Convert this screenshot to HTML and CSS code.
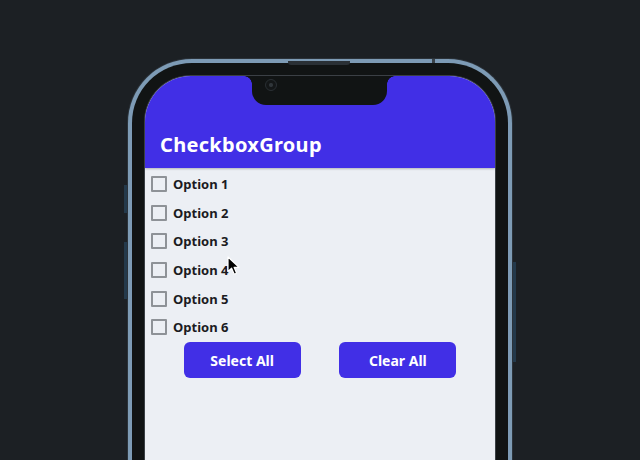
FILE: index.html
```html
<!DOCTYPE html>
<html>
<head>
    <title>CheckboxGroup</title>
    <link rel="stylesheet" href="styles.css">
</head>

<body>
    <div class="phone">
        <span class="speaker"></span>
        <span class="mark"></span>
        <span class="side-btn side-btn-1"></span>
        <span class="side-btn side-btn-2"></span>
        <span class="side-btn side-btn-3"></span>

        <div class="screen">
            <div class="notch"><span class="camera"></span></div>

            <div class="app-bar">
                <h1 class="title">CheckboxGroup</h1>
            </div>

            <ul class="options">
                <li class="option"><span class="box"></span>Option 1</li>
                <li class="option"><span class="box"></span>Option 2</li>
                <li class="option"><span class="box"></span>Option 3</li>
                <li class="option"><span class="box"></span>Option 4</li>
                <li class="option"><span class="box"></span>Option 5</li>
                <li class="option"><span class="box"></span>Option 6</li>
            </ul>

            <div class="actions">
                <button class="btn">Select All</button>
                <button class="btn">Clear All</button>
            </div>
        </div>
    </div>

    <!-- mouse pointer -->
    <svg class="cursor" width="14" height="20" viewBox="0 0 14 20">
        <path d="M1 1 L1 15.5 L4.6 12.2 L7.2 18.2 L9.6 17.2 L7.1 11.3 L12 11.3 Z" fill="#000" stroke="#fff" stroke-width="1.2" stroke-linejoin="round"/>
    </svg>
</body>

</html>
```

FILE: styles.css
```css
body {
    margin: 0;
    height: 460px;
    overflow: hidden;
    background-color: #1c2024;
    font-family: "Noto Sans", "DejaVu Sans", sans-serif;
}

.phone {
    position: relative;
    width: 350px;
    height: 384px;
    margin: 59px auto 0;
    padding: 13px 13px 0;
    border: 4px solid #7d9bb5;
    border-bottom: none;
    border-radius: 64px 64px 0 0;
    background-color: #111414;
    box-shadow: 0 0 0 1px #2b3239;
}

.speaker {
    position: absolute;
    top: -2px;
    left: 156px;
    width: 62px;
    height: 4px;
    border-radius: 0 0 3px 3px;
    background-color: #2a3035;
}

.mark {
    position: absolute;
    top: -4px;
    left: 300px;
    width: 3px;
    height: 4px;
    background-color: #3a4248;
}

.side-btn {
    position: absolute;
    width: 3px;
    background-color: #23394b;
}

.side-btn-1 {
    left: -8px;
    top: 122px;
    height: 28px;
}

.side-btn-2 {
    left: -8px;
    top: 179px;
    height: 57px;
}

.side-btn-3 {
    right: -8px;
    top: 199px;
    height: 100px;
}

.screen {
    position: relative;
    height: 384px;
    border-radius: 46px 46px 0 0;
    background-color: #eceff4;
    overflow: hidden;
    box-shadow: 0 0 0 1px #3b4045;
}

.notch {
    position: absolute;
    z-index: 2;
    top: 0;
    left: 107px;
    width: 135px;
    height: 29px;
    background-color: #111414;
    border-radius: 0 0 14px 14px;
}

.notch::before,
.notch::after {
    content: "";
    position: absolute;
    top: 0;
    width: 8px;
    height: 8px;
}

.notch::before {
    left: -8px;
    background: radial-gradient(circle at 0 100%, transparent 7.5px, #111414 8px);
}

.notch::after {
    right: -8px;
    background: radial-gradient(circle at 100% 100%, transparent 7.5px, #111414 8px);
}

.camera {
    position: absolute;
    top: 3px;
    left: 13px;
    width: 10px;
    height: 10px;
    border: 1.5px solid #2a3034;
    border-radius: 50%;
    background: radial-gradient(circle, #30363a 1.5px, #141718 2.5px);
}

.app-bar {
    position: relative;
    height: 92px;
    padding-left: 15px;
    display: flex;
    align-items: flex-end;
    background-color: #412fe6;
    box-shadow: 0 1px 2px rgba(0, 0, 0, 0.25);
}

.title {
    margin: 0 0 10px;
    color: white;
    font-size: 20px;
    font-weight: bold;
    letter-spacing: 0.3px;
}

.options {
    list-style: none;
    margin: 0;
    padding: 1.5px 0 0 6px;
}

.option {
    height: 28.7px;
    display: flex;
    align-items: center;
    gap: 6px;
    color: #1b1b1f;
    font-size: 13px;
    font-weight: bold;
}

.box {
    width: 12px;
    height: 12px;
    border: 2px solid #8e9297;
    border-radius: 1px;
}

.actions {
    display: flex;
    justify-content: space-evenly;
    margin-top: 0.5px;
}

.btn {
    width: 117px;
    height: 36px;
    border: none;
    border-radius: 6px;
    background-color: #412fe6;
    color: white;
    font-family: inherit;
    font-size: 14px;
    font-weight: bold;
}

.cursor {
    position: absolute;
    left: 227px;
    top: 256px;
}
```
